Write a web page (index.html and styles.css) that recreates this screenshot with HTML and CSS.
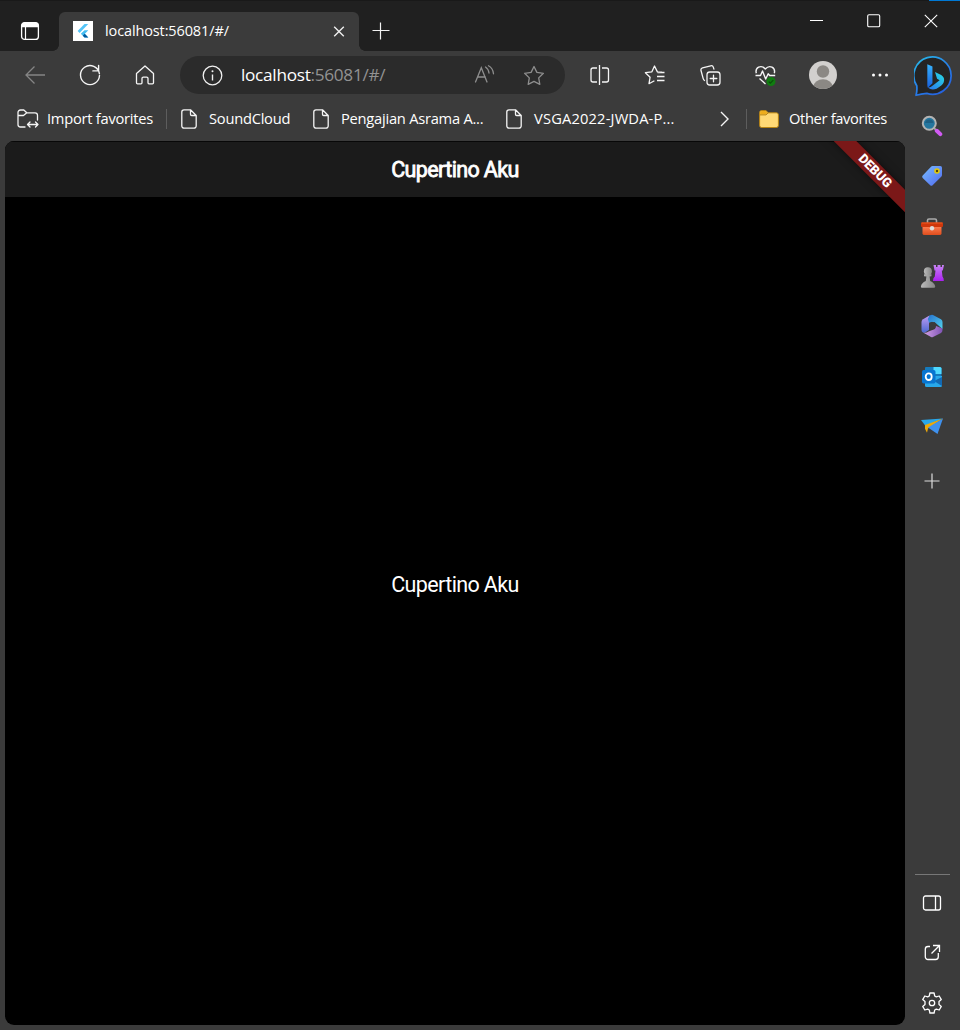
FILE: index.html
```html
<!DOCTYPE html>
<html lang="en">
<head>
<meta charset="utf-8">
<title>localhost:56081/#/</title>
<link rel="stylesheet" href="styles.css">
</head>
<body>
<div class="window">
  <header class="tabstrip">
    <div class="tab-actions"><svg width="20" height="20" viewBox="0 0 20 20"><rect x="1.6" y="1.6" width="16.8" height="16.8" rx="3" fill="none" stroke="#fff" stroke-width="1.3"/><path d="M1.500 6.200V4.500a3 3 0 0 1 3-3h11a3 3 0 0 1 3 3v1.700z" fill="#fff"/><path d="M5.500 6v12" stroke="#fff" stroke-width="1.200"/></svg></div>
    <div class="tab">
      <svg class="favicon" width="20" height="20" viewBox="0 0 20 20"><path d="M0 0h20v20H0z" fill="#fff"/><path d="M11.500 3h3.800L6.600 12 4.600 10z" fill="#54c5f8"/><path d="M11.500 9.300h3.800l-3.400 3.500 3.400 3.700h-3.800L7.800 12.800z" fill="#45bdf2"/><path d="M9.800 14.700l1.900-1.900 3.600 3.700h-3.800z" fill="#01579b"/></svg>
      <span class="tab-title">localhost:56081/#/</span>
      <svg class="tab-close" width="12" height="12" viewBox="0 0 12 12"><path d="M1.200 1.700l9.600 9.600M10.800 1.700L1.200 11.300" stroke="#eee" stroke-width="1.400"/></svg>
    </div>
    <svg class="new-tab" width="18" height="18" viewBox="0 0 18 18"><path d="M8.500 .5v17M.5 8.500h17" stroke="#f2f2f2" stroke-width="1.200"/></svg>
    <div class="window-controls">
      <svg width="14" height="14" viewBox="0 0 14 14"><path d="M0 6.500h13" stroke="#fff"/></svg>
      <svg width="14" height="14" viewBox="0 0 14 14"><rect x=".7" y=".7" width="12" height="12" rx="1.300" fill="none" stroke="#fff" stroke-width="1.100"/></svg>
      <svg width="14" height="14" viewBox="0 0 14 14"><path d="M.8 .8l12.400 12.400M13.200 .8L.8 13.200" stroke="#fff" stroke-width="1.100"/></svg>
    </div>
    <span class="accent-edge"></span>
  </header>

  <div class="body">
    <main class="content">
      <nav class="toolbar">
        <span class="tool"><svg width="22" height="20" viewBox="0 0 22 20"><path d="M10.500 1.500L2 10l8.500 8.500M2 10h19" fill="none" stroke="#858585" stroke-width="1.300"/></svg></span>
        <span class="tool"><svg width="22" height="22" viewBox="0 0 22 22"><path d="M20.400 9.600A9.500 9.500 0 1 0 20.500 11.500M19.600 1.400v5.500h-5.700" fill="none" stroke="#f5f5f5" stroke-width="1.400" stroke-linecap="round"/></svg></span>
        <span class="tool"><svg width="20" height="20" viewBox="0 0 20 20"><path d="M1.500 8.600L10 1l8.500 7.600v9.200a1 1 0 0 1-1 1H14a1 1 0 0 1-1-1v-4.300a1.400 1.400 0 0 0-1.400-1.400H8.400A1.400 1.400 0 0 0 7 13.500v4.300a1 1 0 0 1-1 1H2.500a1 1 0 0 1-1-1z" fill="none" stroke="#f5f5f5" stroke-width="1.300" stroke-linejoin="round"/></svg></span>
        <div class="address">
          <svg width="21" height="21" viewBox="0 0 21 21"><circle cx="10.500" cy="10.500" r="9.300" fill="none" stroke="#f0f0f0" stroke-width="1.300"/><path d="M10.500 9.500v6" stroke="#f0f0f0" stroke-width="1.400"/><circle cx="10.500" cy="6.300" r="1" fill="#f0f0f0"/></svg>
          <span class="url">localhost<span class="url-rest">:56081/#/</span></span>
          <svg class="read-aloud" width="21" height="20" viewBox="0 0 21 20"><g fill="none" stroke="#8e8e8e" stroke-width="1.300" stroke-linecap="round"><path d="M1.500 17L7.300 2.800 13 17M3.500 12h7.800M11.500 2q3 2 3.500 6M14.500 .8q4.500 2.500 5 8"/></g></svg>
          <svg width="22" height="21" viewBox="0 0 22 21"><path d="M11 1.500l2.900 5.900 6.500.9-4.700 4.600 1.100 6.500L11 16.400l-5.800 3 1.100-6.500-4.700-4.600 6.500-.9z" fill="none" stroke="#8e8e8e" stroke-width="1.300" stroke-linejoin="round"/></svg>
        </div>
        <span class="tool"><svg width="20" height="20" viewBox="0 0 20 20"><path d="M9.500 0v20M7 3H3A2 2 0 0 0 1 5v10a2 2 0 0 0 2 2h4M12 3H16.500a2 2 0 0 1 2 2v10a2 2 0 0 1-2 2H12" fill="none" stroke="#f5f5f5" stroke-width="1.300"/></svg></span>
        <span class="tool"><svg width="21" height="20" viewBox="0 0 21 20"><path d="M18 7.200l-4.600-.3L10.500 1 7.900 6.800l-6.500.9 4.700 4.500L5 18.700l5.400-2.900M13.500 7.500H20.500M13 11.500h7.500M13 15.500h7.500" fill="none" stroke="#f5f5f5" stroke-width="1.300" stroke-linejoin="round"/></svg></span>
        <span class="tool collections"><svg width="21" height="21" viewBox="0 0 21 21"><g fill="none" stroke="#f5f5f5" stroke-width="1.300" stroke-linecap="round"><rect x="7" y="7" width="13" height="13" rx="2.800"/><path d="M13.500 10.200v6.600M10.200 13.500h6.600M4.500 15.500q-1-.5-1.300-1.800L1 5.500q-.5-2 1.500-2.600L10.700.8q2-.5 2.600 1.300l.6 2"/></g></svg></span>
        <span class="tool collections"><svg width="21" height="21" viewBox="0 0 21 21"><g fill="none" stroke="#f5f5f5" stroke-width="1.400" stroke-linejoin="round"><path d="M1.300 8.200C-.2 2.500 6-.7 10.300 4 14.600-.7 20.800 2.500 19.300 8.200M.5 10.500h5l2-4.500 3.200 8 2.500-5.200 1.500 1.700h5.500M4.500 13.500l6 5.500"/></g><circle cx="16" cy="16.500" r="4.500" fill="#107c10"/><path d="M13.800 16.700l1.500 1.500 3-3" fill="none" stroke="#0a4e0a" stroke-width="1.200"/></svg></span>
        <span class="tool avatar"><svg width="28" height="28" viewBox="0 0 28 28"><defs><clipPath id="face"><circle cx="14" cy="14" r="14"/></clipPath></defs><g clip-path="url(#face)"><path d="M0 0h28v28H0z" fill="#d2d0ce"/><circle cx="14" cy="10.500" r="6.200" fill="#8b8884"/><ellipse cx="14" cy="25.500" rx="9.500" ry="7.200" fill="#8b8884"/></g></svg></span>
        <span class="tool more"><svg width="18" height="4" viewBox="0 0 18 4"><g fill="#fff"><circle cx="2.500" cy="2" r="1.500"/><circle cx="9" cy="2" r="1.500"/><circle cx="15.500" cy="2" r="1.500"/></g></svg></span>
      </nav>

      <nav class="favorites">
        <svg width="22" height="20" viewBox="0 0 22 20"><g fill="none" stroke="#f5f5f5" stroke-width="1.300" stroke-linejoin="round" stroke-linecap="round"><path d="M8 18H3.500A2.500 2.500 0 0 1 1 15.500v-12A2.500 2.500 0 0 1 3.500 1h3.300l3 2.800H18A2.500 2.500 0 0 1 20.500 6.300V11M1 6.500h5.500L9.800 3.800M10.500 15.500H21M13 13l-2.500 2.500L13 18M18.500 13l2.500 2.500-2.500 2.500"/></g></svg>
        <span class="fav-label import">Import favorites</span>
        <span class="rule"></span>
        <svg class="page" width="16" height="20" viewBox="0 0 16 20"><path d="M9.500.8H3A2.200 2.200 0 0 0 .8 3v14A2.200 2.200 0 0 0 3 19.200h10a2.200 2.200 0 0 0 2.200-2.200V6.500zM9.500.8v4.500a1.200 1.200 0 0 0 1.200 1.200h4.500" fill="none" stroke="#f5f5f5" stroke-width="1.300" stroke-linejoin="round"/></svg>
        <span class="fav-label sound">SoundCloud</span>
        <svg class="page" width="16" height="20" viewBox="0 0 16 20"><path d="M9.500.8H3A2.200 2.200 0 0 0 .8 3v14A2.200 2.200 0 0 0 3 19.200h10a2.200 2.200 0 0 0 2.200-2.200V6.500zM9.500.8v4.500a1.200 1.200 0 0 0 1.200 1.200h4.500" fill="none" stroke="#f5f5f5" stroke-width="1.300" stroke-linejoin="round"/></svg>
        <span class="fav-label pengajian">Pengajian Asrama A...</span>
        <svg class="page" width="16" height="20" viewBox="0 0 16 20"><path d="M9.500.8H3A2.200 2.200 0 0 0 .8 3v14A2.200 2.200 0 0 0 3 19.200h10a2.200 2.200 0 0 0 2.200-2.200V6.500zM9.500.8v4.500a1.200 1.200 0 0 0 1.200 1.200h4.500" fill="none" stroke="#f5f5f5" stroke-width="1.300" stroke-linejoin="round"/></svg>
        <span class="fav-label vsga">VSGA2022-JWDA-P...</span>
        <svg class="chevron" width="9" height="16" viewBox="0 0 9 16"><path d="M1 1l7 7-7 7" fill="none" stroke="#f5f5f5" stroke-width="1.400"/></svg>
        <span class="rule end"></span>
        <svg class="folder" width="20" height="18" viewBox="0 0 20 18"><path d="M.6 15.500V2.500a2 2 0 0 1 2-2h4.200l2.500 2.300h8.100a2 2 0 0 1 2 2v10.700a2 2 0 0 1-2 2H2.600a2 2 0 0 1-2-2z" fill="#ffd976" stroke="#b88412"/><path d="M1.100 4.600V2.500A1.500 1.500 0 0 1 2.600 1h4l2 1.900-1.800 1.700z" fill="#eead1c"/><path d="M1 4.900h6l2.200-2" fill="none" stroke="#b88412"/></svg>
        <span class="fav-label other">Other favorites</span>
      </nav>

      <section class="viewport">
        <div class="app-bar"><h1 class="app-title">Cupertino Aku</h1></div>
        <div class="app-body">Cupertino Aku</div>
        <div class="debug">DEBUG</div>
      </section>
    </main>

    <aside class="sidebar">
      <span class="slot bing"><svg width="41" height="41" viewBox="0 0 40 40"><defs><linearGradient id="ring" x2=".7" y2="1"><stop stop-color="#27bfe8"/><stop offset=".5" stop-color="#2786e8"/><stop offset="1" stop-color="#2561e0"/></linearGradient><linearGradient id="stem" x2="0" y2="1"><stop stop-color="#36b4ff"/><stop offset="1" stop-color="#1961dd"/></linearGradient><linearGradient id="bowl" x1="1" x2="0" y2="1"><stop stop-color="#28dfe3"/><stop offset="1" stop-color="#2872ee"/></linearGradient></defs><path d="M2 38.300Q3.200 34 2.700 29A18.200 18.200 0 1 1 12.500 36.500Q7 37 2 38.300z" fill="#242424" stroke="url(#ring)" stroke-width="1.700" stroke-linejoin="round"/><path d="M13 8l5 2.300v16.400L13.500 31q-.5-1-.5-3z" fill="url(#stem)"/><path d="M20.500 15.500l6 3.100q4 2.500 2.500 7-1.300 3.200-7 6.300-5 2-8.500-1.200 2 .5 5.500-2.500l6-4.500-2.500-1.400z" fill="url(#bowl)"/></svg></span>
      <span class="slot"><svg width="22" height="22" viewBox="0 0 22 22"><path d="M13 13l2.500 2.500" stroke="#999" stroke-width="2"/><path d="M15.800 15.800l3.500 3.300" stroke="#d15af3" stroke-width="4" stroke-linecap="round"/><circle cx="8.300" cy="8.300" r="6.500" fill="#25769e" stroke="#b3b3b3" stroke-width="2"/><path d="M4 8a4.400 4.400 0 0 1 8.600 0" fill="#1e5f83"/></svg></span>
      <span class="slot"><svg width="22" height="22" viewBox="0 0 22 22"><defs><linearGradient id="tag" x2="1" y2="1"><stop stop-color="#79bfff"/><stop offset="1" stop-color="#5068ef"/></linearGradient></defs><path d="M11.500 1h7.800Q21 1 21 2.800V10q0 1-.8 1.800l-8.600 8.400q-1.200 1-2.400 0l-7.500-7.100q-1.200-1.200 0-2.500L10 1.700q.5-.7 1.500-.7z" fill="url(#tag)"/><circle cx="16" cy="6" r="2" fill="#51440f" stroke="#e3c90a" stroke-width="1.600"/></svg></span>
      <span class="slot low"><svg width="24" height="20" viewBox="0 0 24 20"><defs><linearGradient id="box" x2="0" y2="1"><stop stop-color="#ff8053"/><stop offset="1" stop-color="#df4d1d"/></linearGradient></defs><path d="M7.500 6V3.500q0-1.500 1.500-1.500h6q1.500 0 1.500 1.500V6" fill="none" stroke="#aaa" stroke-width="1.600"/><path d="M2.500 9h19v7.500q0 1.500-2 1.500h-15q-2 0-2-1.500z" fill="url(#box)"/><rect x="1" y="5.500" width="22" height="4.500" rx="1" fill="#cf370b"/><path d="M1.500 6h21" stroke="#f45b20"/><circle cx="12" cy="11.300" r="2.200" fill="#ddd"/></svg></span>
      <span class="slot"><svg width="24" height="24" viewBox="0 0 24 24"><defs><linearGradient id="rook" x2="0" y2="1"><stop stop-color="#c783f4"/><stop offset="1" stop-color="#aa20f0"/></linearGradient><linearGradient id="pawn"><stop stop-color="#bbb"/><stop offset="1" stop-color="#858585"/></linearGradient></defs><path d="M13.500 1H16v2h1.500V1h3v2H22V1h2l-1.200 5.500h-1l.7 6q1.500 1.500 1.300 4.500H13q-.2-3 1.800-4.500l.7-6h-1z" fill="url(#rook)"/><path d="M4 10.200h7.500v2L9.600 12.500l.6 4.500q4.500 2 5 5.500.1 1.300-1.200 1.300H2Q.8 23.800.9 22.500q.5-3.500 4.900-5.500l.6-4.500L4 12.200z" fill="url(#pawn)"/><circle cx="7.900" cy="7.300" r="4" fill="url(#pawn)"/></svg></span>
      <span class="slot"><svg width="22" height="24" viewBox="0 0 22 24"><defs><linearGradient id="m1" x2="0" y2="1"><stop stop-color="#c09bf3"/><stop offset="1" stop-color="#4c69d0"/></linearGradient><linearGradient id="m2" x2="1" y2="1"><stop stop-color="#2672cf"/><stop offset="1" stop-color="#53d3ed"/></linearGradient><linearGradient id="m3" x2="1"><stop stop-color="#d3a1e7"/><stop offset="1" stop-color="#8054b5"/></linearGradient></defs><path d="M8.500 1.500L2 5.200Q.5 6.200.5 8v8q0 1.700 1.500 2.500 1.300.5 2.500-.2L8 16z" fill="url(#m1)"/><path d="M8.500 1.500L10 1q1-.5 2 0l8 4.200q1.500 1 1.500 2.800v7L13.500 8 8 8.500 6.800 5z" fill="url(#m2)"/><path d="M21.500 14.500V16q0 2-1.500 3l-8 4q-1 .5-2 0l-7.500-4.300q3 .5 5-1.200L14 15l1-3z" fill="url(#m3)"/><path d="M8 9.500l3-1.700 3.500 2v4L11 16l-3-1.700z" fill="#3b3b3b"/></svg></span>
      <span class="slot low"><svg width="22" height="22" viewBox="0 0 22 22"><path d="M5 1h14q1.500 0 1.500 1.500V11H4V2q0-1 1-1z" fill="#157abc"/><path d="M12.500 1H19q1.500 0 1.500 1.500V8h-8z" fill="#4fd9ff"/><path d="M4 10h17v9.500q0 1.500-1.500 1.500h-14Q4 21 4 19.500z" fill="#28a8ea"/><path d="M21 11v9l-8-5z" fill="#1269b3"/><rect x="1" y="4" width="13.500" height="13.500" rx="1.700" fill="#0875d1"/><ellipse cx="7.700" cy="10.700" rx="3" ry="3.300" fill="none" stroke="#fff" stroke-width="1.800"/></svg></span>
      <span class="slot"><svg width="24" height="20" viewBox="0 0 24 20"><path d="M1 4l22-1.500L5.500 10z" fill="#28a7ea"/><path d="M5 9L23 2.500 8 12.500l-1 4.200-2-4z" fill="#eda90a"/><path d="M23 2.500L17.500 18 8 11.500z" fill="#3f91ee"/></svg></span>
      <span class="slot add"><svg width="16" height="16" viewBox="0 0 16 16"><path d="M8 .5v15M.5 8h15" stroke="#ddd" stroke-width="1.200"/></svg></span>
      <div class="sidebar-tools">
        <span class="slot"><svg width="20" height="18" viewBox="0 0 20 18"><rect x="1.500" y="2" width="17" height="14" rx="2" fill="none" stroke="#fff" stroke-width="1.300"/><path d="M13.500 2v14" stroke="#fff" stroke-width="1.300"/></svg></span>
        <span class="slot"><svg width="17" height="17" viewBox="0 0 17 17"><path d="M6 2.500H4A2.700 2.700 0 0 0 1.300 5.200v7.600A2.700 2.700 0 0 0 4 15.500h7.600a2.700 2.700 0 0 0 2.700-2.700V9M9 1.500h6.500V8M7.500 9.500l8-8" fill="none" stroke="#fff" stroke-width="1.300"/></svg></span>
        <span class="slot"><svg width="22" height="22" viewBox="0 0 22 22"><path d="M8.900 1h4.200l.6 3 1.600.9L18.200 4l2.100 3.600-2.300 2v2.800l2.300 2-2.100 3.600-2.900-.9-1.600.9-.6 3H8.900l-.6-3-1.600-.9-2.900.9-2.100-3.600 2.300-2V9.600l-2.300-2L3.800 4l2.900.9L8.300 4z" fill="none" stroke="#fff" stroke-width="1.300" stroke-linejoin="round"/><circle cx="11" cy="11" r="2.700" fill="none" stroke="#fff" stroke-width="1.300"/></svg></span>
      </div>
    </aside>
  </div>
</div>
</body>
</html>
```
FILE: styles.css
```css
* { box-sizing: border-box; }
body { margin: 0; background: #3b3b3b; color: #fff; font-family: "Open Sans", "Noto Sans", sans-serif; }
svg { display: block; flex: none; }

.window { width: 960px; height: 1030px; display: flex; flex-direction: column; overflow: hidden; }

.tabstrip { position: relative; height: 51px; flex: none; display: flex; align-items: flex-end; background: #202020; border-top: 1px solid #191919; }
.tab-actions { width: 59px; height: 40px; display: flex; align-items: center; justify-content: center; }
.tab { position: relative; width: 300px; height: 39px; display: flex; align-items: center; padding: 0 14px 1px; background: #3b3b3b; border-radius: 6px 6px 0 0; }
.tab::before, .tab::after { content: ""; position: absolute; bottom: 0; width: 6px; height: 6px; }
.tab::before { left: -6px; background: radial-gradient(circle at 0 0, transparent 5.5px, #3b3b3b 6px); }
.tab::after { right: -6px; background: radial-gradient(circle at 100% 0, transparent 5.5px, #3b3b3b 6px); }
.tab-title { margin-left: 12px; padding-bottom: 1px; font-size: 14.5px; line-height: 20px; letter-spacing: -.12px; white-space: nowrap; }
.tab-close { margin-left: auto; }
.new-tab { margin: 0 0 11px 13px; }
.window-controls { display: flex; gap: 43px; margin: 0 22px 23px auto; }
.accent-edge { position: absolute; top: -1px; right: 0; width: 31px; height: 1px; background: #0078d4; }

.body { display: flex; flex: 1; min-height: 0; }
.content { width: 905px; display: flex; flex-direction: column; }

.toolbar { height: 48px; flex: none; display: flex; align-items: center; padding-left: 7px; }
.tool { width: 55px; display: flex; justify-content: center; flex: none; }
.collections { padding-left: 1px; }
.avatar { width: 62px; }
.more { width: 51px; }
.address { width: 385px; height: 38px; flex: none; display: flex; align-items: center; margin: 0 7px 0 8px; padding: 0 20px 0 22px; border-radius: 19px; background: #2b2b2b; }
.url { margin-left: 18px; padding-bottom: 1px; font-size: 17.2px; line-height: 24px; letter-spacing: -.28px; white-space: nowrap; }
.url-rest { color: #929292; }
.read-aloud { margin: 0 28px 0 auto; }

.favorites { height: 42px; flex: none; display: flex; align-items: center; padding: 0 0 3px 17px; }
.fav-label { padding-bottom: 2px; font-size: 14.7px; line-height: 20px; letter-spacing: -.25px; white-space: nowrap; flex: none; }
.import { width: 119px; margin-left: 8px; }
.rule { width: 1px; height: 20px; margin-right: 14px; background: #5d5d5d; }
.sound { width: 104px; margin-left: 12px; }
.pengajian { width: 165px; margin-left: 12px; }
.vsga { width: 186px; margin-left: 12px; letter-spacing: .16px; }
.rule.end { margin: 0 12px 0 17px; }
.other { margin-left: 10px; letter-spacing: -.35px; }

.viewport { position: relative; width: 900px; height: 884px; margin-left: 5px; border-radius: 9px; overflow: hidden; background: #000; display: flex; flex-direction: column; font-family: Roboto, sans-serif; font-size: 21.5px; line-height: 26px; letter-spacing: -.62px; }
.app-bar { height: 56px; flex: none; display: flex; align-items: center; justify-content: center; background: #1b1b1b; border-top: 1px solid #080808; }
.app-title { margin: 0; font-size: inherit; font-weight: 400; -webkit-text-stroke: .8px #fff; }
.app-body { flex: 1; display: flex; align-items: center; justify-content: center; padding-bottom: 52px; }
.debug { position: absolute; top: 22px; right: -40px; width: 140px; height: 16px; transform: rotate(45deg); background: #7b1818; box-shadow: 0 0 8px rgba(0, 0, 0, .5); font-size: 13px; font-weight: 900; line-height: 16px; letter-spacing: -.1px; text-align: center; }

.sidebar { width: 55px; padding-right: 1px; display: flex; flex-direction: column; align-items: stretch; }
.slot { height: 50px; flex: none; display: flex; align-items: center; justify-content: center; }
.bing { padding-left: 4px; }
.low { padding-top: 1px; }
.add { height: 60px; }
.sidebar-tools { margin: auto 9px 3px 10px; padding-top: 2px; border-top: 1px solid #777; }
.sidebar-tools .slot { padding: 1px 1px 0 0; }
```
